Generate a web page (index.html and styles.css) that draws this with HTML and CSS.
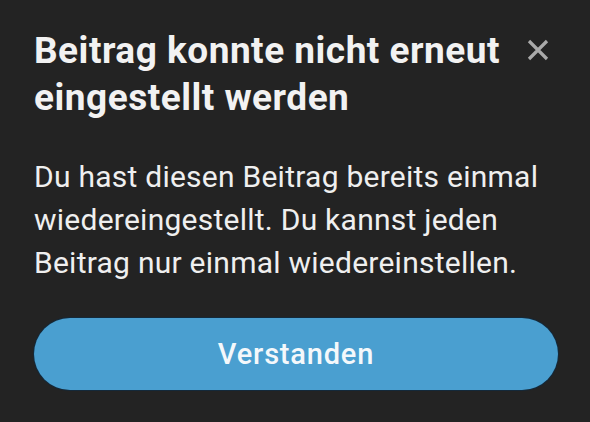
FILE: index.html
```html
<!DOCTYPE html>
<html lang="de">
<head>
<meta charset="utf-8">
<link rel="stylesheet" href="styles.css">
</head>
<body>
<div class="dialog">
  <div class="header">
    <h1 class="title">Beitrag konnte nicht erneut eingestellt werden</h1>
    <button class="close" aria-label="Schließen">
      <svg viewBox="0 0 24 24" width="24" height="24"><path d="M3 3 L21 21 M21 3 L3 21" stroke="#a9a9a9" stroke-width="3.2" fill="none"/></svg>
    </button>
  </div>
  <p class="text">Du hast diesen Beitrag bereits einmal wiedereingestellt. Du kannst jeden Beitrag nur einmal wiedereinstellen.</p>
  <button class="primary">Verstanden</button>
</div>
</body>
</html>
```
FILE: styles.css
```css
html, body {
  margin: 0;
  padding: 0;
  background: #232323;
  width: 590px;
  height: 422px;
  overflow: hidden;
}
.dialog {
  display: flex;
  flex-direction: column;
  padding: 27px 32px 0 34px;
  font-family: Roboto, "Noto Sans", sans-serif;
}
.header {
  display: flex;
  justify-content: space-between;
  align-items: flex-start;
  padding-right: 8px;
}
.title {
  margin: 0;
  width: 484px;
  font-size: 37px;
  line-height: 47px;
  letter-spacing: 0.5px;
  font-weight: 700;
  color: #f2f2f2;
}
.close {
  margin: 11px 0 0 0;
  padding: 0;
  border: 0;
  background: none;
  width: 24px;
  height: 24px;
  display: flex;
}
.text {
  margin: 34px 0 0 0;
  font-size: 30px;
  line-height: 43px;
  letter-spacing: 0.25px;
  color: #efefef;
}
.primary {
  margin-top: 34px;
  height: 72px;
  border: 0;
  border-radius: 36px;
  background: #4a9fd0;
  box-shadow: 0 0 0 1px #14293a;
  color: #f4f8fb;
  font-family: Roboto, "Noto Sans", sans-serif;
  font-size: 29px;
  letter-spacing: 0.8px;
  font-weight: 500;
}
```
